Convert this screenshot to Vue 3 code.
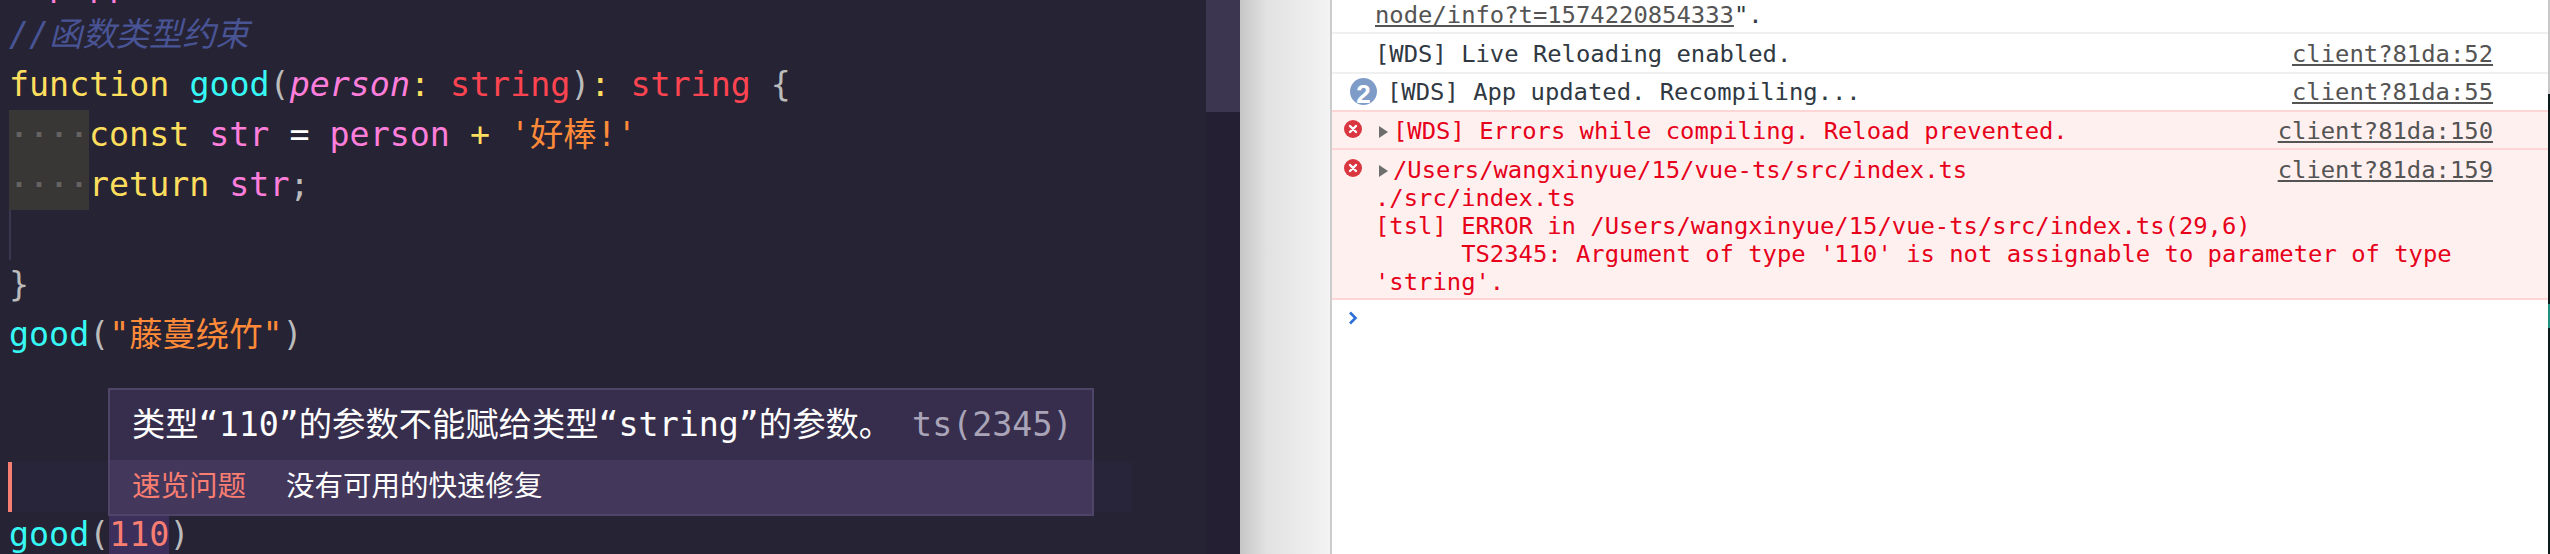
<script setup>
const clipped = ' '.repeat(32) + 'p' + ' '.repeat(22) + 'g' + ' '.repeat(7) + 'p' + ' '.repeat(2) + 'p'
const tsLine = ' '.repeat(6) + "TS2345: Argument of type '110' is not assignable to parameter of type"
const prevLine = '  p pp'
</script>

<template>
  <div class="screen">
    <section class="editor">
      <div class="code">
        <div class="line"><span class="pink">{{ prevLine }}</span></div>
        <div class="line"><span class="comment">//函数类型约束</span></div>
        <div class="line"><span class="yellow">function</span>{{ ' ' }}<span class="cyan">good</span><span class="grey">(</span><span class="pink italic">person</span><span class="yellow">:</span>{{ ' ' }}<span class="red">string</span><span class="grey">)</span><span class="yellow">:</span>{{ ' ' }}<span class="red">string</span>{{ ' ' }}<span class="grey">{</span></div>
        <div class="line"><span class="indent">····</span><span class="yellow">const</span>{{ ' ' }}<span class="pink">str</span>{{ ' ' }}<span class="white">=</span>{{ ' ' }}<span class="pink">person</span>{{ ' ' }}<span class="yellow">+</span>{{ ' ' }}<span class="orange">'好棒!'</span></div>
        <div class="line"><span class="indent">····</span><span class="yellow">return</span>{{ ' ' }}<span class="pink">str</span><span class="grey">;</span></div>
        <div class="line guide"></div>
        <div class="line"><span class="grey">}</span></div>
        <div class="line"><span class="cyan">good</span><span class="grey">(</span><span class="orange">"藤蔓绕竹"</span><span class="grey">)</span></div>
        <div class="line"></div>
        <div class="line"></div>
        <div class="line current"></div>
        <div class="line after-current"><span class="cyan">good</span><span class="grey">(</span><span class="squiggle">110</span><span class="grey">)</span></div>
      </div>

      <div class="scroll-track"></div>
      <div class="scroll-thumb"></div>

      <div class="hover">
        <div class="hover-main">类型“110”的参数不能赋给类型“string”的参数。 <span class="code-ref">ts(2345)</span></div>
        <div class="hover-status">
          <span class="peek">速览问题</span>
          <span>没有可用的快速修复</span>
        </div>
      </div>
    </section>

    <div class="shade"></div>

    <section class="console">
      <div class="row row-clipped">
        <div class="msg clip-line">{{ clipped }}</div>
        <div class="msg"><span class="link">node/info?t=1574220854333</span>".</div>
      </div>

      <div class="row row-log">
        <span class="msg">[WDS] Live Reloading enabled.</span>
        <span class="link source">client?81da:52</span>
      </div>

      <div class="row row-count">
        <span class="badge">2</span>
        <span class="msg">[WDS] App updated. Recompiling...</span>
        <span class="link source">client?81da:55</span>
      </div>

      <div class="row row-error row-error-one">
        <svg class="err" viewBox="0 0 18 18"><circle cx="9" cy="9" r="9" fill="#d9363f"/><path d="M6 6l6 6M12 6l-6 6" stroke="#fff" stroke-width="2.4" stroke-linecap="round"/></svg>
        <svg class="tri" viewBox="0 0 9 12"><path d="M0 0l9 6-9 6z" fill="#6e6e6e"/></svg>
        <span class="msg">[WDS] Errors while compiling. Reload prevented.</span>
        <span class="link source">client?81da:150</span>
      </div>

      <div class="row-error row-error-long">
        <div class="row-head">
          <svg class="err" viewBox="0 0 18 18"><circle cx="9" cy="9" r="9" fill="#d9363f"/><path d="M6 6l6 6M12 6l-6 6" stroke="#fff" stroke-width="2.4" stroke-linecap="round"/></svg>
          <svg class="tri" viewBox="0 0 9 12"><path d="M0 0l9 6-9 6z" fill="#6e6e6e"/></svg>
          <span class="msg">/Users/wangxinyue/15/vue-ts/src/index.ts</span>
          <span class="link source">client?81da:159</span>
        </div>
        <div class="msg block">./src/index.ts</div>
        <div class="msg block">[tsl] ERROR in /Users/wangxinyue/15/vue-ts/src/index.ts(29,6)</div>
        <div class="msg block">{{ tsLine }}</div>
        <div class="msg block">'string'.</div>
      </div>

      <div class="prompt">
        <svg viewBox="0 0 10 14" width="10" height="14"><path d="M2 1.5L7.5 7 2 12.5" fill="none" stroke="#2d6fd8" stroke-width="2.6"/></svg>
      </div>
    </section>

    <div class="edge"></div>
  </div>
</template>

<style>
html, body { margin: 0; background: #fff; }
</style>

<style scoped>
.screen {
  display: flex;
  width: 2550px;
  height: 554px;
  overflow: hidden;
}

/* editor */
.editor {
  position: relative;
  width: 1240px;
  height: 554px;
  flex: none;
  overflow: hidden;
  background: #262335;
  font-family: "DejaVu Sans Mono", "Noto Sans CJK SC", monospace;
  font-size: 33.3px;
}
.code { margin-top: -40px; }
.line {
  height: 50px;
  line-height: 50px;
  padding-left: 9px;
  white-space: pre;
}
.guide {
  background: linear-gradient(#3a3650, #3a3650) 9px 0 / 2px 100% no-repeat;
}
.current {
  margin: 2px 0 0 8px;
  padding-left: 0;
  width: 1124px;
  background: #28243a;
  border-left: 4px solid #f97e72;
  box-sizing: border-box;
}
.after-current { margin-top: -2px; }
.indent {
  display: inline-block;
  width: 80px;
  height: 50px;
  vertical-align: top;
  background: #393636;
  color: #646262;
  font-family: "Liberation Mono", monospace;
  font-weight: 700;
}
.comment { color: #495495; font-style: italic; }
.italic { font-style: italic; }
.yellow { color: #fede5d; }
.cyan { color: #36f9f6; }
.pink { color: #ff7edb; }
.red { color: #fe4450; }
.orange { color: #ff8b39; }
.grey { color: #bbbbbb; }
.white { color: #ffffff; }
.squiggle { color: #f97e72; background: #3c2f5c; }

.scroll-track {
  position: absolute;
  left: 1206px;
  top: 0;
  width: 34px;
  height: 554px;
  background: #241f33;
}
.scroll-thumb {
  position: absolute;
  left: 1206px;
  top: 0;
  width: 34px;
  height: 112px;
  background: #3d3651;
}

.hover {
  position: absolute;
  left: 108px;
  top: 388px;
  width: 986px;
  height: 128px;
  box-sizing: border-box;
  border: 2px solid #4e4569;
  background: #372e4d;
  color: #fff;
}
.hover-main {
  height: 70px;
  line-height: 70px;
  padding-left: 22px;
  white-space: pre;
}
.code-ref { color: #a9a4b8; }
.hover-status {
  height: 54px;
  line-height: 54px;
  padding-left: 22px;
  background: #44375c;
  font-size: 28.5px;
  display: flex;
  gap: 40px;
}
.peek { color: #f97e72; }

/* gutter */
.shade {
  width: 90px;
  flex: none;
  background: linear-gradient(90deg, #c6c6c6 0%, #e2e2e2 30%, #f3f3f3 100%);
}

/* console */
.console {
  flex: none;
  width: 1216px;
  height: 554px;
  border-left: 2px solid #cccccc;
  background: #fff;
  font-family: "DejaVu Sans Mono", monospace;
  font-size: 23.85px;
  line-height: 28px;
  color: #303942;
  overflow: hidden;
  white-space: pre;
}
.row {
  display: flex;
  box-sizing: border-box;
  border-bottom: 2px solid #f0f0f0;
  padding-left: 43px;
}
.row-clipped {
  display: block;
  height: 34px;
  padding-top: 1px;
}
.clip-line { margin-top: -28px; height: 28px; }
.msg { display: block; }
.row-log { height: 40px; padding-top: 6px; }
.row-count { height: 36px; padding: 4px 0 0 18px; border-bottom: 0; }
.badge {
  width: 27px;
  height: 27px;
  flex: none;
  border-radius: 50%;
  background: #7f9cc9;
  color: #fff;
  font-family: "Liberation Sans", sans-serif;
  font-weight: 700;
  font-size: 26px;
  line-height: 33px;
  text-align: center;
  overflow: hidden;
  margin-right: 10px;
}
.link {
  color: #545454;
  text-decoration: underline;
}
.source { margin-left: auto; margin-right: 55px; }

.row-error {
  background: #fff0f0;
  color: #e6001a;
  border-bottom: 2px solid #ffd6d6;
}
.row-error .link { color: #545454; }
.row-error-one {
  height: 40px;
  padding: 5px 0 0 12px;
  border-top: 2px solid #ffd6d6;
}
.row-error-long {
  display: block;
  height: 150px;
  box-sizing: border-box;
  padding-top: 6px;
}
.row-head {
  display: flex;
  padding-left: 12px;
}
.err {
  width: 18px;
  height: 18px;
  flex: none;
  margin-top: 3px;
}
.tri {
  width: 9px;
  height: 12px;
  flex: none;
  margin: 9px 5px 0 17px;
}
.block { padding-left: 43px; }
.prompt {
  padding: 10px 0 0 16px;
  line-height: 14px;
}

.edge {
  width: 2px;
  flex: none;
  background: linear-gradient(180deg, #c8c8c8 0 94px, #0c1a1c 94px 304px, #1f8f80 304px 328px, #0c1a1c 328px);
}
</style>
